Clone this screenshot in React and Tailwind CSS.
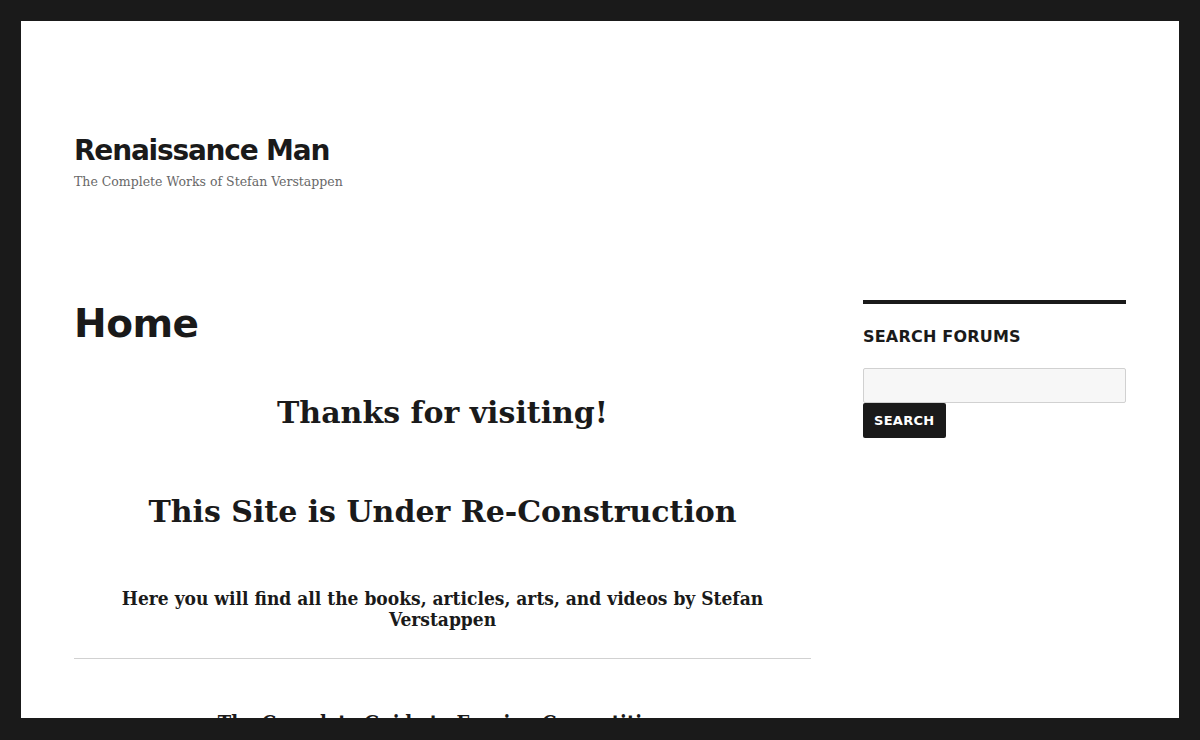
export default function App() {
  const sans = { fontFamily: '"DejaVu Sans", Inter, sans-serif' };
  const serif = { fontFamily: '"DejaVu Serif", "Liberation Serif", serif' };
  const serifCond = { fontFamily: '"DejaVu Serif Condensed", "DejaVu Serif", serif', fontStretch: 'condensed' };
  return (
    <div className="min-h-screen bg-[#1a1a1a] px-[21px] pt-[21px]">
      <div className="bg-white min-h-[900px] px-[53px]">
        <header className="pt-[112px]">
          <div className="text-[28px] leading-[35px] font-bold text-[#1a1a1a] tracking-[-1.2px]" style={sans}>Renaissance Man</div>
          <div className="text-[12.5px] leading-[21px] text-[#686868] mt-[3px]" style={serif}>The Complete Works of Stefan Verstappen</div>
        </header>
        <div className="flex gap-[52px] mt-[107px]">
          <main className="w-[737px] shrink-0">
            <h1 className="text-[39px] leading-[49px] font-bold text-[#1a1a1a] tracking-[-0.5px]" style={sans}>Home</h1>
            <div className="text-center text-[#1a1a1a]" style={serif}>
              <h2 className="text-[30px] leading-[40px] font-bold mt-[45px]">Thanks for visiting!</h2>
              <h2 className="text-[30px] leading-[40px] font-bold mt-[59px]">This Site is Under Re-Construction</h2>
              <h4 className="text-[19px] leading-[21px] font-bold mt-[56px]" style={serifCond}>Here you will find all the books, articles, arts, and videos by Stefan Verstappen</h4>
            </div>
            <hr className="border-0 border-t border-[#d1d1d1] mt-[28px]" />
            <h3 className="text-center text-[20px] leading-[30px] font-bold text-[#1a1a1a] mt-[49px]" style={serifCond}>The Complete Guide to Fencing Competition</h3>
          </main>
          <aside className="w-[263px] shrink-0 pt-[1px]">
            <div className="border-t-4 border-[#1a1a1a] pt-[22px]">
              <h2 className="text-[16px] leading-[22px] font-bold uppercase tracking-[0.2px] text-[#1a1a1a]" style={sans}>Search Forums</h2>
              <div className="mt-[20px] h-[35px] bg-[#f7f7f7] border border-[#d1d1d1] rounded-[2px]"></div>
              <button className="bg-[#1a1a1a] text-white text-[13px] leading-[16px] font-bold uppercase px-[11px] py-[9.5px] rounded-[2px] tracking-[0.3px]" style={sans}>Search</button>
            </div>
          </aside>
        </div>
      </div>
      <div className="fixed left-0 right-0 bottom-0 h-[22px] bg-[#1a1a1a]"></div>
    </div>
  );
}
